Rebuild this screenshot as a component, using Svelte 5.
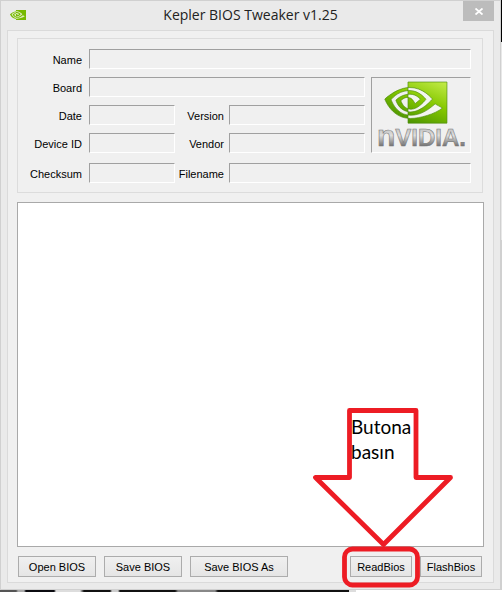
<script>
  const leftButtons = [
    { text: 'Open BIOS', size: 'medium' },
    { text: 'Save BIOS', size: 'medium' },
    { text: 'Save BIOS As', size: 'large' }
  ];
</script>

{#snippet field(id, text, kind)}
  <label class="label {kind}" for={id}>{text}</label>
  <input class="value {kind}" {id} type="text" readonly />
{/snippet}

{#snippet eye()}
  <path d="M8.948 8.798v-1.430a6.700 6.700 0 0 1 .424-.018c3.922-.124 6.493 3.374 6.493 3.374s-2.774 3.851-5.750 3.851c-.398 0-.787-.062-1.158-.185v-4.346c1.528.185 1.837.857 2.747 2.385l2.040-1.714s-1.492-1.952-4-1.952a6.016 6.016 0 0 0-.796.035m0-4.735v2.138l.424-.027c5.450-.185 9.010 4.470 9.010 4.470s-4.080 4.964-8.330 4.964c-.370 0-.733-.035-1.095-.097v1.325c.3.035.61.062.91.062 3.957 0 6.820-2.023 9.593-4.408.459.371 2.340 1.263 2.730 1.652-2.633 2.208-8.772 3.984-12.253 3.984-.335 0-.653-.018-.971-.053v1.864H24V4.063zm0 10.326v1.131c-3.657-.654-4.673-4.460-4.673-4.460s1.758-1.944 4.673-2.262v1.237H8.940c-1.528-.186-2.730 1.245-2.730 1.245s.68 2.412 2.739 3.110M2.456 10.900s2.164-3.197 6.500-3.533V6.201C4.153 6.590 0 10.653 0 10.653s2.350 6.802 8.948 7.420v-1.237c-4.840-.6-6.492-5.936-6.492-5.936z" />
{/snippet}

<div class="screen">
  <main class="window">
    <header class="titlebar">
      <svg class="app-icon" viewBox="0 4 24 16" preserveAspectRatio="none" aria-hidden="true">
        <path d="M9 4.500H23.500V19.500H9Z" fill="#dcebbd" />
        <path d="M1 11C5 5 10 5 10 5V18C4 17 1 11 1 11Z" fill="#dcebbd" />
        <g fill="#76b900">{@render eye()}</g>
      </svg>
      <h1>Kepler BIOS Tweaker v1.25</h1>
      <button class="close" aria-label="Close">
        <svg viewBox="0 0 8 7" aria-hidden="true"><path d="M.5 .5L7.500 6.500M7.500 .5L.5 6.500" stroke="#fff" stroke-width="1.800" /></svg>
      </button>
    </header>

    <div class="client">
      <section class="info">
        {@render field('name', 'Name', 'name')}
        {@render field('board', 'Board', 'board')}
        {@render field('date', 'Date', 'date')}
        {@render field('version', 'Version', 'second version')}
        {@render field('device', 'Device ID', 'device')}
        {@render field('vendor', 'Vendor', 'second vendor')}
        {@render field('checksum', 'Checksum', 'checksum')}
        {@render field('filename', 'Filename', 'second filename')}
        <div class="brand">
          <svg viewBox="0 0 98 74" role="img" aria-label="NVIDIA">
            <defs>
              <linearGradient id="green" x1="1" y1="0" x2=".4" y2="1">
                <stop offset="0" stop-color="#c4ec4a" />
                <stop offset=".5" stop-color="#85c800" />
                <stop offset="1" stop-color="#4c9400" />
              </linearGradient>
              <linearGradient id="metal" x1="0" y1="0" x2="0" y2="1">
                <stop offset=".2" stop-color="#b8b8b8" />
                <stop offset=".5" stop-color="#dedede" />
                <stop offset=".8" stop-color="#777777" />
              </linearGradient>
            </defs>
            <path d="M37 5H74V44H37Z" fill="#f3f5ee" />
            <g transform="translate(12.800 -6.500) scale(2.590)" fill="url(#green)" stroke="#4c8a0c" stroke-width=".25">{@render eye()}</g>
            <text x="5" y="68" fill="url(#metal)" stroke="#7c7c7c" stroke-width=".6"><tspan font-size="30">n</tspan><tspan font-size="24">VIDIA.</tspan></text>
          </svg>
        </div>
      </section>

      <section class="pane" aria-label="BIOS contents"></section>

      <footer class="actions">
        {#each leftButtons as item}
          <button class="btn {item.size}">{item.text}</button>
        {/each}
        <span class="spacer"></span>
        <button class="btn small">ReadBios</button>
        <button class="btn small">FlashBios</button>
      </footer>
    </div>

    <div class="callout">
      <svg viewBox="0 0 142 184" fill="none" stroke="#ed1c24" stroke-width="4.800" stroke-linejoin="round" aria-hidden="true">
        <path d="M37.500 5.500H104V72.500H138.500L71.500 139.500L3.500 72.500H37.500Z" />
        <rect x="32.500" y="144" width="73" height="36" rx="8" />
      </svg>
      <p>Butona basın</p>
    </div>
  </main>
  <div class="behind-right"></div>
  <div class="behind-bottom"></div>
</div>

<style>
  .screen {
    display: grid;
    grid-template-columns: 1fr 1px;
    grid-template-rows: 1fr 2px;
    min-height: 100vh;
    font-family: "Liberation Sans", Arial, sans-serif;
    color: #000;
  }
  .window {
    position: relative;
    box-sizing: border-box;
    display: flex;
    flex-direction: column;
    padding: 0 6px 6px;
    border: 1px solid #d0d0d0;
    background: #eaeaea;
  }
  .titlebar {
    display: grid;
    grid-template-columns: 1fr auto 1fr;
    align-items: start;
    height: 29px;
  }
  .app-icon {
    width: 16px;
    height: 10px;
    margin: 9px 0 0 3px;
  }
  h1 {
    margin: 0;
    font: 400 14px/28px "Open Sans", "Noto Sans", sans-serif;
    color: #222;
    white-space: nowrap;
  }
  .close {
    justify-self: end;
    display: grid;
    place-items: center;
    width: 31px;
    height: 20px;
    padding: 0;
    border: 0;
    background: #bcbcbc;
  }
  .close svg {
    width: 8px;
    height: 7px;
  }
  .client {
    flex: 1;
    display: flex;
    flex-direction: column;
    gap: 9px;
    padding: 7px 9px 5px;
    border: 1px solid #dadada;
    background: #f0f0f0;
  }
  .info {
    display: grid;
    grid-template-columns: 71px 86px 54px 1fr 106px;
    grid-template-rows: repeat(5, 20px);
    row-gap: 8px;
    margin-right: 1px;
    padding: 10px 11px 11px 0;
    border: 1px solid #dcdcdc;
  }
  .label {
    grid-column: 1;
    padding-right: 7px;
    text-align: right;
    font-size: 11px;
    line-height: 22px;
  }
  .label.second {
    grid-column: 3;
    padding-right: 5px;
  }
  .value {
    grid-column: 2;
    box-sizing: border-box;
    width: 100%;
    height: 20px;
    padding: 0 3px;
    border: 1px solid;
    border-color: #a0a0a0 #fff #fff #a0a0a0;
    background: #f0f0f0;
    font: inherit;
    font-size: 11px;
    outline: none;
  }
  .value.second { grid-column: 4; }
  .name { grid-row: 1; }
  .board { grid-row: 2; }
  .date, .version { grid-row: 3; }
  .device, .vendor { grid-row: 4; }
  .checksum, .filename {
    grid-row: 5;
    margin-top: 2px;
  }
  .value.name { grid-column: 2 / 6; }
  .value.board { grid-column: 2 / 5; }
  .value.filename { grid-column: 4 / 6; }
  .brand {
    grid-area: 2 / 5 / 5 / 6;
    margin-left: 6px;
    border: 1px solid;
    border-color: #a0a0a0 #fff #fff #a0a0a0;
  }
  .brand svg {
    display: block;
    width: 98px;
    height: 74px;
  }
  .brand text {
    font-family: "Liberation Sans", Arial, sans-serif;
    font-weight: 700;
  }
  .pane {
    flex: 1;
    min-height: 200px;
    border: 1px solid #a9a9a9;
    background: #fff;
  }
  .actions {
    display: flex;
    gap: 8px;
    margin-top: -1px;
    padding: 1px 2px 0 1px;
  }
  .spacer { flex: 1; }
  .btn {
    height: 21px;
    padding: 0;
    border: 1px solid #acacac;
    background: linear-gradient(#f0f0f0, #e5e5e5);
    color: #000;
    font: 11px/18px "Liberation Sans", Arial, sans-serif;
    white-space: nowrap;
  }
  .small { width: 62px; }
  .medium { width: 78px; }
  .large { width: 98px; }
  .callout {
    position: absolute;
    right: 46px;
    bottom: 0;
    width: 142px;
    height: 184px;
    pointer-events: none;
  }
  .callout svg {
    display: block;
    width: 142px;
    height: 184px;
  }
  .callout p {
    position: absolute;
    top: 9px;
    left: 39px;
    width: 64px;
    margin: 0;
    font: 19px/25px Lato, sans-serif;
  }
  .behind-right {
    background: linear-gradient(#000 42px, #e8e8e8 42px 240px, #d0d0d0 240px);
  }
  .behind-bottom {
    grid-column: 1 / 3;
    background: linear-gradient(90deg, #555 0 16px, #aaa 18px 24px, #0b0b10 26px 54px, #ddd 56px 80px, #111 84px 110px, #ccc 112px 118px, #111 120px 175px, #888 178px 215px, #111 218px 349px, #ddd 349px 356px, #fff 356px);
  }
</style>
